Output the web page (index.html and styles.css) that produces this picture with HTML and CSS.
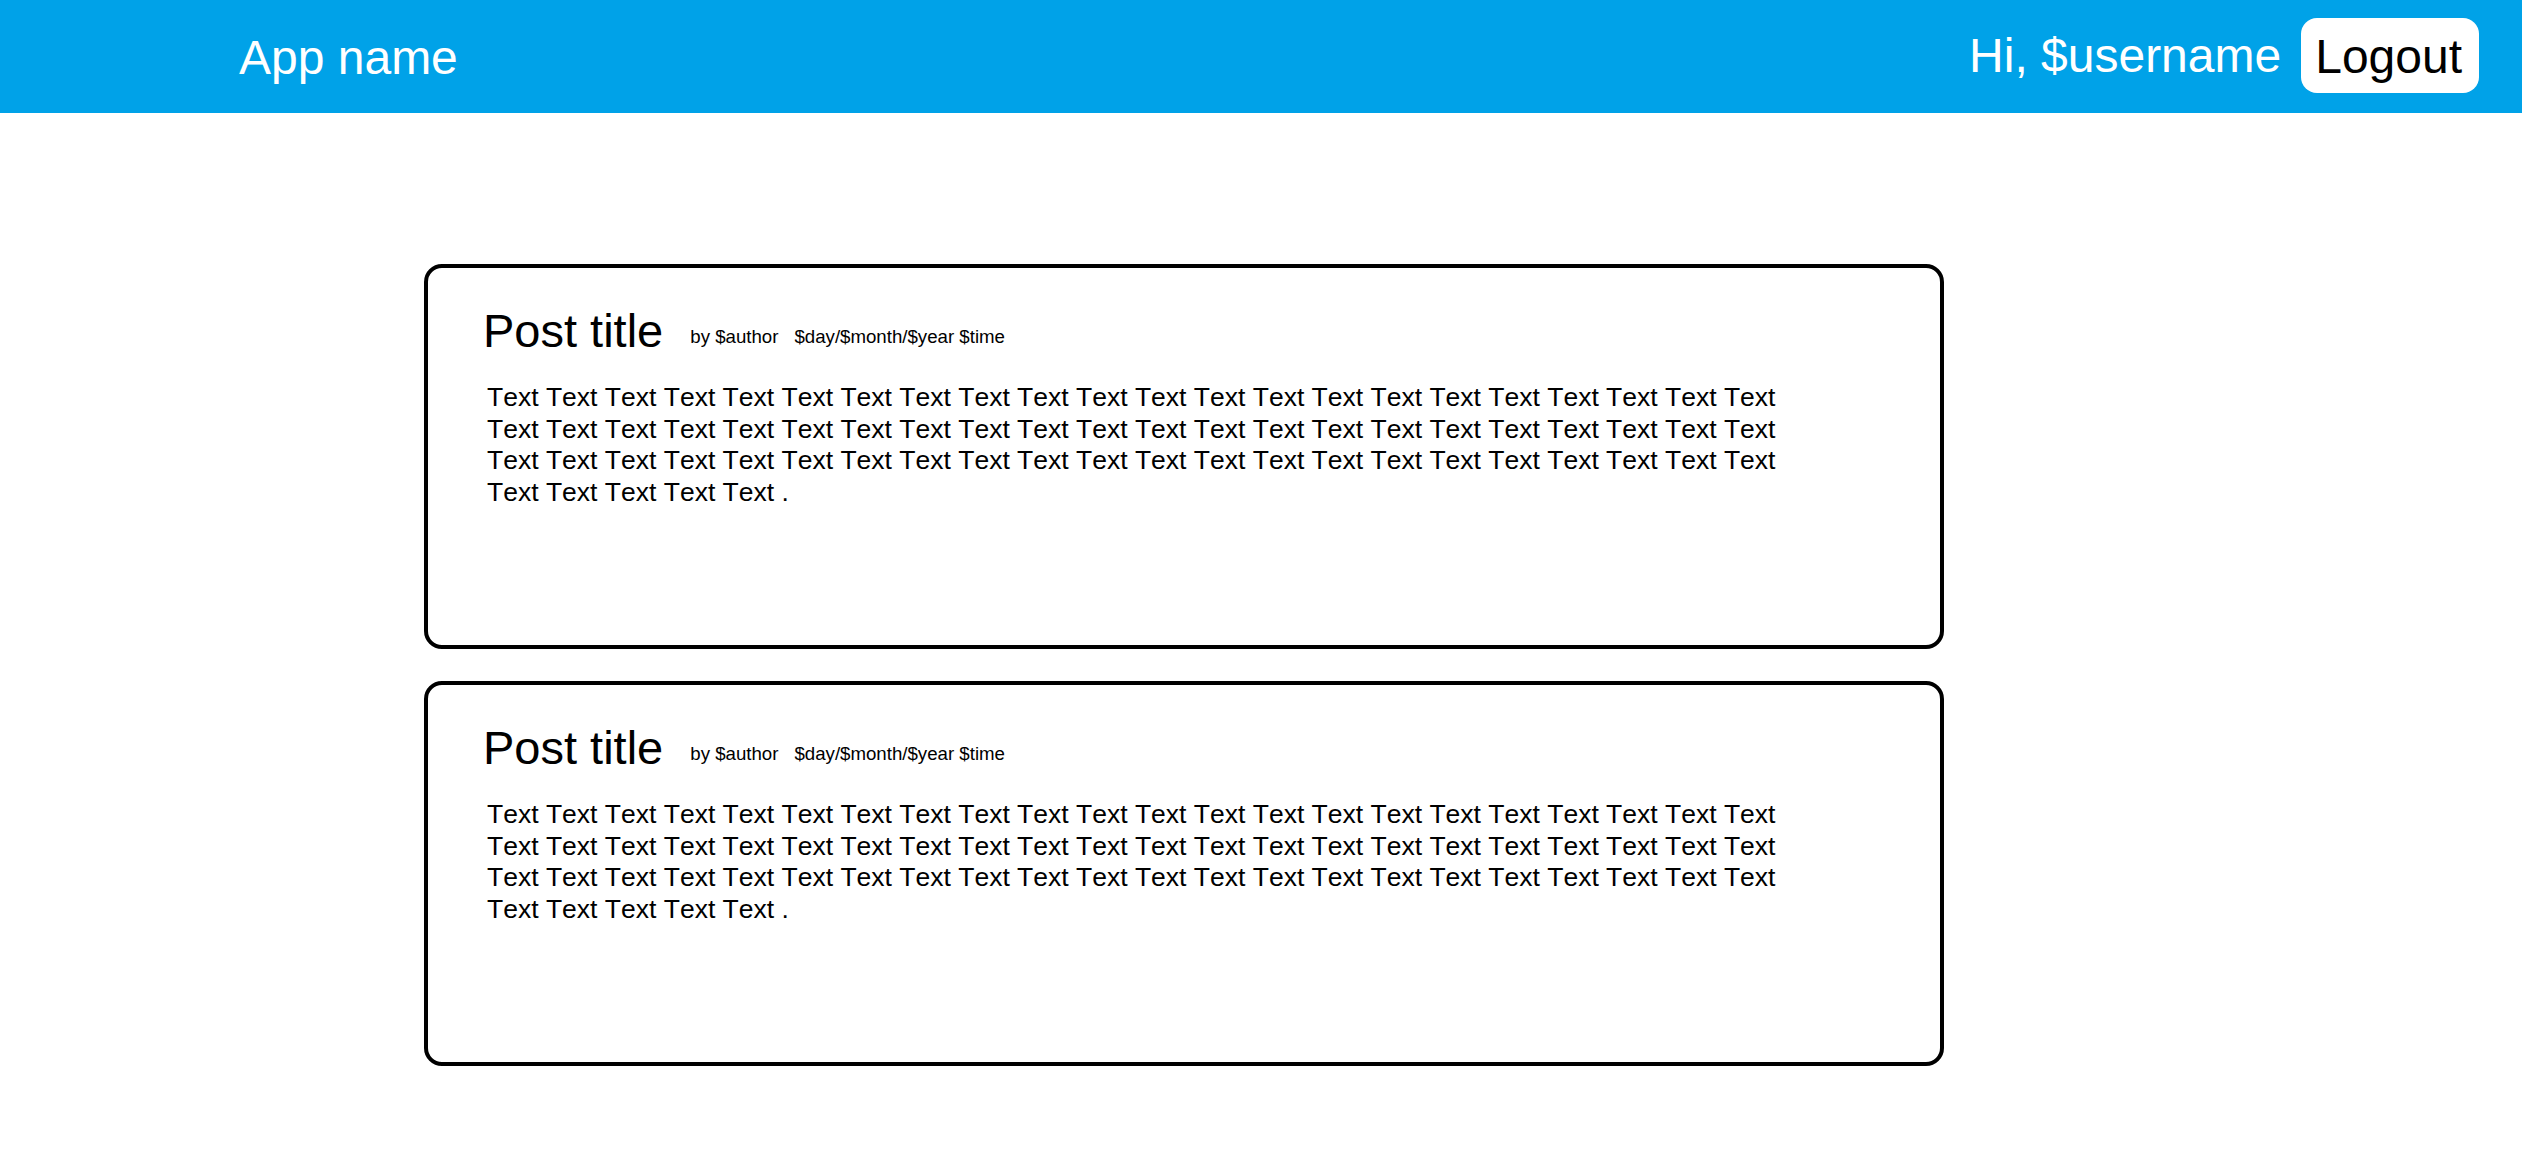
FILE: index.html
```html
<!DOCTYPE html>
<html lang="en">
<head>
<meta charset="utf-8">
<title>App name</title>
<link rel="stylesheet" href="styles.css">
</head>
<body>
<header class="topbar">
  <div class="brand">App name</div>
  <div class="user">
    <span class="greeting">Hi, $username</span>
    <button class="logout">Logout</button>
  </div>
</header>
<main class="feed">
  <article class="post">
    <div class="post-head"><h2 class="post-title">Post title</h2><span class="post-meta"><span>by $author</span><span class="post-date">$day/$month/$year $time</span></span></div>
    <p class="post-body">Text Text Text Text Text Text Text Text Text Text Text Text Text Text Text Text Text Text Text Text Text Text Text Text Text Text Text Text Text Text Text Text Text Text Text Text Text Text Text Text Text Text Text Text Text Text Text Text Text Text Text Text Text Text Text Text Text Text Text Text Text Text Text Text Text Text Text Text Text Text Text .</p>
  </article>
  <article class="post">
    <div class="post-head"><h2 class="post-title">Post title</h2><span class="post-meta"><span>by $author</span><span class="post-date">$day/$month/$year $time</span></span></div>
    <p class="post-body">Text Text Text Text Text Text Text Text Text Text Text Text Text Text Text Text Text Text Text Text Text Text Text Text Text Text Text Text Text Text Text Text Text Text Text Text Text Text Text Text Text Text Text Text Text Text Text Text Text Text Text Text Text Text Text Text Text Text Text Text Text Text Text Text Text Text Text Text Text Text Text .</p>
  </article>
</main>
</body>
</html>
```
FILE: styles.css
```css
html, body {
  margin: 0;
  padding: 0;
  background: #ffffff;
}

body {
  font-family: "Liberation Sans", Arial, sans-serif;
  font-kerning: none;
  color: #000000;
}

.topbar {
  box-sizing: border-box;
  height: 113px;
  background: #00a2e8;
  display: flex;
  justify-content: space-between;
  align-items: flex-start;
  padding: 0 43px 0 239px;
}

.brand {
  margin-top: 30px;
  font-size: 48px;
  line-height: 56px;
  color: #ffffff;
}

.user {
  display: flex;
  align-items: flex-start;
  gap: 20px;
}

.greeting {
  margin-top: 28px;
  font-size: 48px;
  line-height: 56px;
  color: #ffffff;
}

.logout {
  margin-top: 18px;
  padding: 11px 17px 8px 14px;
  border: none;
  border-radius: 16px;
  background: #ffffff;
  color: #000000;
  font-family: "Liberation Sans", Arial, sans-serif;
  font-kerning: none;
  font-size: 48px;
  line-height: 56px;
  cursor: pointer;
}

.feed {
  display: flex;
  flex-direction: column;
  gap: 32px;
  padding: 151px 0 40px 424px;
}

.post {
  box-sizing: border-box;
  width: 1520px;
  height: 385px;
  border: 4px solid #000000;
  border-radius: 18px;
  padding: 35px 0 0 55px;
}

.post-head {
  font-size: 47px;
  line-height: 55px;
  white-space: nowrap;
}

.post-title {
  display: inline;
  margin: 0;
  font-size: 47px;
  font-weight: normal;
}

.post-meta {
  margin-left: 27px;
  font-size: 18.67px;
  line-height: 20px;
  vertical-align: 4px;
}

.post-date {
  margin-left: 16px;
}

.post-body {
  width: 1320px;
  margin: 24px 0 0 4px;
  font-size: 26.5px;
  line-height: 31.67px;
}
```
